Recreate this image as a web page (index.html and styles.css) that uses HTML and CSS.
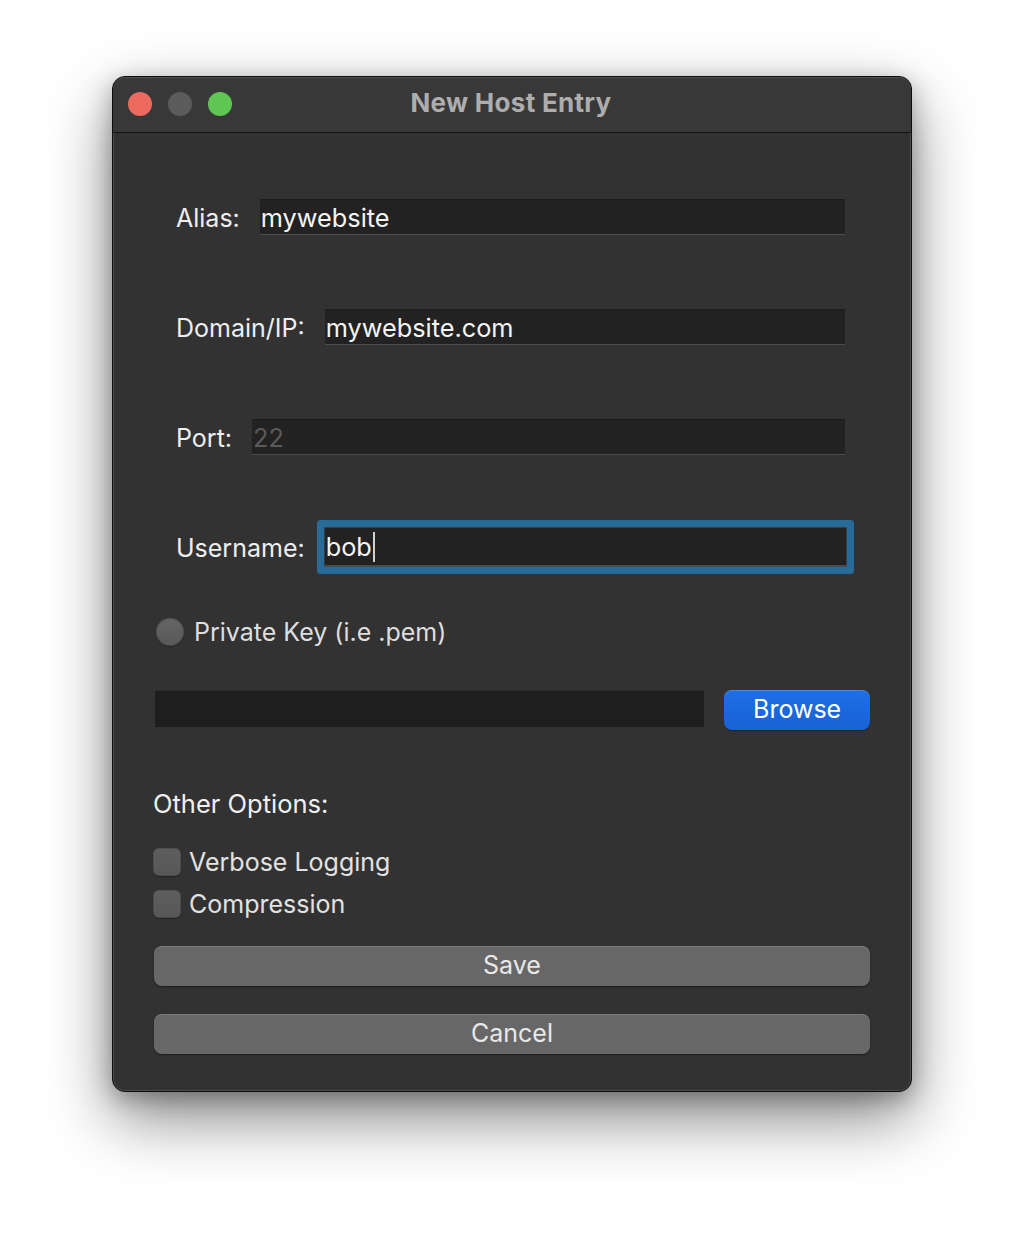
FILE: index.html
```html
<!DOCTYPE html>
<html>
<head>
<meta charset="utf-8">
<link rel="stylesheet" href="styles.css">
</head>
<body>
<div class="stage">
  <div class="window">
    <div class="titlebar">
      <div class="lights">
        <span class="light red"></span>
        <span class="light gray"></span>
        <span class="light green"></span>
      </div>
      <div class="title">New Host Entry</div>
    </div>
    <div class="content">
      <div class="row row-first">
        <span class="label">Alias:</span>
        <div class="field"><span class="value">mywebsite</span></div>
      </div>
      <div class="row">
        <span class="label">Domain/IP:</span>
        <div class="field"><span class="value">mywebsite.com</span></div>
      </div>
      <div class="row">
        <span class="label">Port:</span>
        <div class="field"><span class="placeholder">22</span></div>
      </div>
      <div class="row row-focus">
        <span class="label">Username:</span>
        <div class="field focused"><span class="value">bob</span><span class="caret"></span></div>
      </div>
      <div class="radio-row">
        <span class="radio"></span>
        <span class="option-text">Private Key (i.e .pem)</span>
      </div>
      <div class="file-row">
        <div class="file-field"></div>
        <button class="browse">Browse</button>
      </div>
      <div class="section-title">Other Options:</div>
      <div class="check-row check-first">
        <span class="checkbox"></span>
        <span class="option-text">Verbose Logging</span>
      </div>
      <div class="check-row check-second">
        <span class="checkbox"></span>
        <span class="option-text">Compression</span>
      </div>
      <button class="push save">Save</button>
      <button class="push cancel">Cancel</button>
    </div>
  </div>
</div>
</body>
</html>
```
FILE: styles.css
```css
* { box-sizing: border-box; }
html, body {
  margin: 0;
  padding: 0;
  background: #ffffff;
}
body {
  font-family: "Inter", "Noto Sans", sans-serif;
  width: 1024px;
  height: 1240px;
  overflow: hidden;
}
.stage {
  padding: 76px 0 0 112px;
}
.window {
  width: 800px;
  height: 1016px;
  background: #323232;
  border: 1px solid #0c0c0c;
  border-radius: 13px;
  box-shadow: inset 0 0 0 1px rgba(255,255,255,0.13),
              0 26px 64px rgba(0,0,0,0.48),
              0 6px 22px rgba(0,0,0,0.28);
  overflow: hidden;
  display: flex;
  flex-direction: column;
}
.titlebar {
  position: relative;
  height: 56px;
  flex: 0 0 auto;
  background: #383838;
  border-bottom: 1px solid #141414;
  display: flex;
  align-items: center;
  justify-content: center;
  border-radius: 12px 12px 0 0;
  box-shadow: inset 0 1px 0 rgba(255,255,255,0.12);
}
.lights {
  position: absolute;
  left: 15px;
  top: 15px;
  display: flex;
  gap: 16px;
}
.light {
  width: 24px;
  height: 24px;
  border-radius: 50%;
  display: block;
}
.red { background: #ed6a5e; }
.gray { background: #5b5b5b; }
.green { background: #5fc553; }
.title {
  color: #adadad;
  font-weight: 700;
  font-size: 26px;
  letter-spacing: 0.3px;
  margin-left: -2px;
  margin-top: -5px;
}
.content {
  flex: 1 1 auto;
  display: flex;
  flex-direction: column;
  padding: 0 41px 0 41px;
}
.row {
  display: flex;
  align-items: center;
  height: 36px;
  margin-top: 74px;
  padding-left: 22px;
  padding-right: 25px;
  gap: 20px;
}
.row-first { margin-top: 66px; }
.row-focus {
  margin-top: 72px;
  height: 40px;
  padding-right: 23px;
  gap: 19px;
}
.label {
  color: #eeeeee;
  font-size: 25px;
  white-space: nowrap;
  padding-top: 2px;
}
.field {
  flex: 1 1 auto;
  height: 36px;
  background: #222222;
  border-top: 1px solid #1c1c1c;
  border-bottom: 1px solid #4c4c4c;
  display: flex;
  align-items: center;
  padding-left: 1px;
  font-size: 25.3px;
}
.field.focused {
  height: 40px;
  border: 1px solid #3c3c3c;
  border-bottom: 2px solid #4a4a4a;
  border-radius: 1px;
  box-shadow: 0 0 0 7px #286b98;
  padding-left: 1px;
}
.value { color: #f4f4f4; }
.placeholder { color: #5a5a5a; }
.caret {
  display: inline-block;
  width: 2px;
  height: 30px;
  background: #d0d0d0;
  margin-left: 1px;
}
.radio-row {
  display: flex;
  align-items: center;
  margin-top: 51px;
  height: 28px;
  padding-left: 2px;
  gap: 10px;
}
.radio {
  width: 28px;
  height: 28px;
  border-radius: 50%;
  background: linear-gradient(#666666, #585858);
  box-shadow: inset 0 0 0 1px rgba(0,0,0,0.18), 0 1px 1px rgba(0,0,0,0.3);
}
.option-text {
  color: #dedede;
  font-size: 25px;
}
.file-row {
  display: flex;
  align-items: flex-start;
  margin-top: 44px;
  height: 40px;
  padding-left: 1px;
  gap: 20px;
}
.file-field {
  width: 550px;
  height: 37px;
  background: #1e1e1e;
  border-top: 1px solid #2a2a2a;
}
.browse {
  width: 146px;
  height: 40px;
  border: none;
  border-radius: 8px;
  background: linear-gradient(#1f6fe6, #1762d4);
  box-shadow: inset 0 1px 0 rgba(255,255,255,0.18), 0 1px 1px rgba(0,0,0,0.35);
  color: #ffffff;
  font-family: inherit;
  font-size: 25px;
  padding: 0;
  padding-bottom: 2px;
}
.section-title {
  margin-top: 62px;
  height: 24px;
  line-height: 24px;
  color: #f0f0f0;
  font-size: 25.5px;
  margin-left: -1px;
}
.check-row {
  display: flex;
  align-items: center;
  height: 28px;
  gap: 8px;
  margin-left: -1px;
}
.check-first { margin-top: 32px; }
.check-second { margin-top: 14px; }
.checkbox {
  width: 28px;
  height: 28px;
  border-radius: 6px;
  background: linear-gradient(#5e5e5e, #575757);
  box-shadow: inset 0 0 0 1px rgba(0,0,0,0.15), 0 1px 1px rgba(0,0,0,0.3);
}
.check-row .option-text { font-size: 25px; color: #e2e2e2; }
.push {
  margin-top: 28px;
  margin-left: 0;
  width: 716px;
  height: 40px;
  border: none;
  border-radius: 8px;
  background: #676767;
  box-shadow: inset 0 1px 0 rgba(255,255,255,0.14), 0 1px 2px rgba(0,0,0,0.45);
  color: #e8e8e8;
  font-family: inherit;
  font-size: 25px;
  padding: 0;
  padding-bottom: 2px;
}
```
